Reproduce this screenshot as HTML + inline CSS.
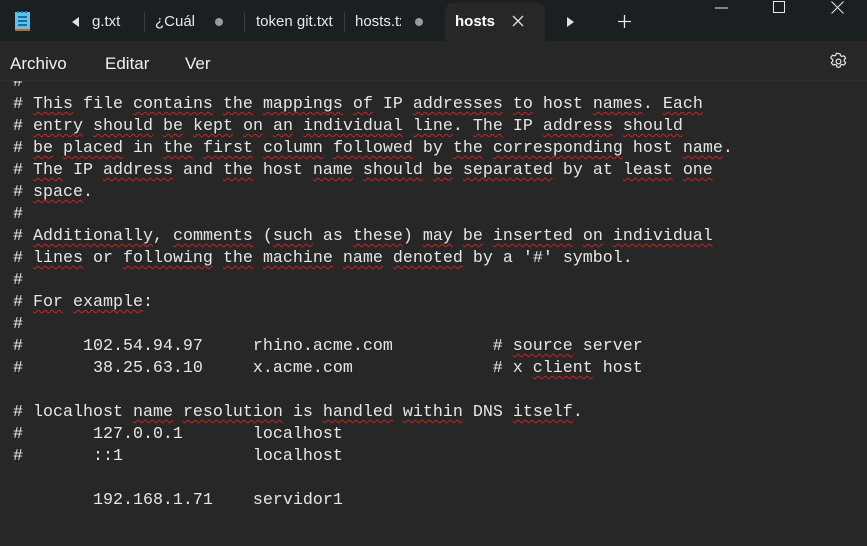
<!DOCTYPE html>
<html><head><meta charset="utf-8"><style>
*{margin:0;padding:0;box-sizing:border-box}
body{width:867px;height:546px;overflow:hidden;background:#272727;font-family:"Segoe UI","Liberation Sans",sans-serif;color:#fff;position:relative}
#title{position:absolute;left:0;top:0;width:867px;height:41px;background:#1b1f1f}
.t{position:absolute;top:13px;font-size:15px;color:#e8e8e8;white-space:nowrap;overflow:hidden}
.sep{position:absolute;top:12px;width:1px;height:20px;background:#3a3d3d}
.dot{position:absolute;top:18px;width:8px;height:8px;border-radius:50%;background:#9a9a9a}
#active{position:absolute;left:445px;top:3px;width:100px;height:38px;background:#272727;border-radius:8px 8px 0 0}
#menu{position:absolute;top:41px;left:0;width:867px;height:40px;background:#272727;border-bottom:1px solid #2f2f2f}
.m{position:absolute;top:54px;font-size:17px;color:#f0f0f0}
#ed{position:absolute;left:13px;top:72px;font-family:"Liberation Mono",monospace;font-size:16.67px;line-height:22px;color:#e6e6e6;white-space:pre;clip-path:inset(9px 0 0 0)}
u{text-decoration:underline wavy #d02020;text-decoration-thickness:1px;text-underline-offset:3px}
</style></head><body>
<div id="title">
<svg style="position:absolute;left:15px;top:10px" width="16" height="22" viewBox="0 0 16 22"><rect x="0" y="2" width="15" height="17" fill="#5ac4ec"/><rect x="0" y="19" width="15" height="2" fill="#c4652a"/><rect x="3" y="6" width="9" height="2" fill="#1b6f99"/><rect x="3" y="10" width="9" height="2" fill="#1b6f99"/><rect x="3" y="14" width="9" height="2" fill="#1b6f99"/><rect x="2" y="1" width="2" height="2" fill="#1b6f99"/><rect x="6" y="1" width="2" height="2" fill="#1b6f99"/><rect x="10" y="1" width="2" height="2" fill="#1b6f99"/></svg>
<svg style="position:absolute;left:72px;top:17px" width="8" height="10"><path d="M7 0L0 5L7 10Z" fill="#e0e0e0"/></svg>
<div class="t" style="left:92px;width:35px">g.txt</div>
<div class="sep" style="left:144px"></div>
<div class="t" style="left:155px;width:44px">¿Cuál es</div>
<div class="dot" style="left:215px"></div>
<div class="sep" style="left:244px"></div>
<div class="t" style="left:256px">token git.txt</div>
<div class="sep" style="left:344px"></div>
<div class="t" style="left:355px;width:46px">hosts.txt</div>
<div class="dot" style="left:415px"></div>
<div id="active"></div>
<div class="t" style="left:455px;font-weight:bold;color:#fff">hosts</div>
<svg style="position:absolute;left:512px;top:15px" width="12" height="12"><path d="M1 1L11 11M11 1L1 11" stroke="#e0e0e0" stroke-width="1.3"/></svg>
<svg style="position:absolute;left:567px;top:17px" width="8" height="10"><path d="M0 0L7 5L0 10Z" fill="#e0e0e0"/></svg>
<svg style="position:absolute;left:618px;top:15px" width="13" height="13"><path d="M6.5 0V13M0 6.5H13" stroke="#e8e8e8" stroke-width="1.3"/></svg>
<svg style="position:absolute;left:715px;top:7px" width="13" height="2"><path d="M0 1H13" stroke="#e8e8e8"/></svg>
<svg style="position:absolute;left:773px;top:1px" width="12" height="12"><rect x="0.5" y="0.5" width="11" height="11" fill="none" stroke="#e8e8e8"/></svg>
<svg style="position:absolute;left:831px;top:1px" width="13" height="13"><path d="M0.5 0.5L12.5 12.5M12.5 0.5L0.5 12.5" stroke="#e8e8e8"/></svg>
</div>
<div id="menu"></div>
<div class="m" style="left:10px">Archivo</div>
<div class="m" style="left:105px">Editar</div>
<div class="m" style="left:185px">Ver</div>
<svg style="position:absolute;left:829px;top:52px" width="19" height="19" viewBox="0 0 24 24"><path d="M12 2l2 .3.6 2.4 1.6.9 2.4-.8 1.4 1.4 1 1.8-1.8 1.7v1.9l1.8 1.7-1 1.8-1.4 1.4-2.4-.8-1.6.9-.6 2.4-2 .3-2-.3-.6-2.4-1.6-.9-2.4.8-1.4-1.4-1-1.8 1.8-1.7v-1.9L2.2 7.3l1-1.8 1.4-1.4 2.4.8 1.6-.9.6-2.4z" fill="none" stroke="#e8e8e8" stroke-width="1.5" stroke-linejoin="round"/><circle cx="12" cy="12" r="3" fill="none" stroke="#e8e8e8" stroke-width="1.5"/></svg>
<div id="ed">#
# <u>This</u> file <u>contains</u> <u>the</u> <u>mappings</u> <u>of</u> IP <u>addresses</u> <u>to</u> host <u>names</u>. <u>Each</u>
# <u>entry</u> <u>should</u> <u>be</u> <u>kept</u> <u>on</u> <u>an</u> <u>individual</u> <u>line</u>. <u>The</u> IP <u>address</u> <u>should</u>
# <u>be</u> <u>placed</u> in <u>the</u> <u>first</u> <u>column</u> <u>followed</u> by <u>the</u> <u>corresponding</u> host <u>name</u>.
# <u>The</u> IP <u>address</u> and <u>the</u> host <u>name</u> <u>should</u> <u>be</u> <u>separated</u> by at <u>least</u> <u>one</u>
# <u>space</u>.
#
# <u>Additionally</u>, <u>comments</u> (<u>such</u> as <u>these</u>) <u>may</u> <u>be</u> <u>inserted</u> <u>on</u> <u>individual</u>
# <u>lines</u> or <u>following</u> <u>the</u> <u>machine</u> <u>name</u> <u>denoted</u> by a '#' symbol.
#
# <u>For</u> <u>example</u>:
#
#      102.54.94.97     rhino.acme.com          # <u>source</u> server
#       38.25.63.10     x.acme.com              # x <u>client</u> host

# localhost <u>name</u> <u>resolution</u> is <u>handled</u> <u>within</u> DNS <u>itself</u>.
#	127.0.0.1       localhost
#	::1             localhost

	192.168.1.71    servidor1</div>
</body></html>
